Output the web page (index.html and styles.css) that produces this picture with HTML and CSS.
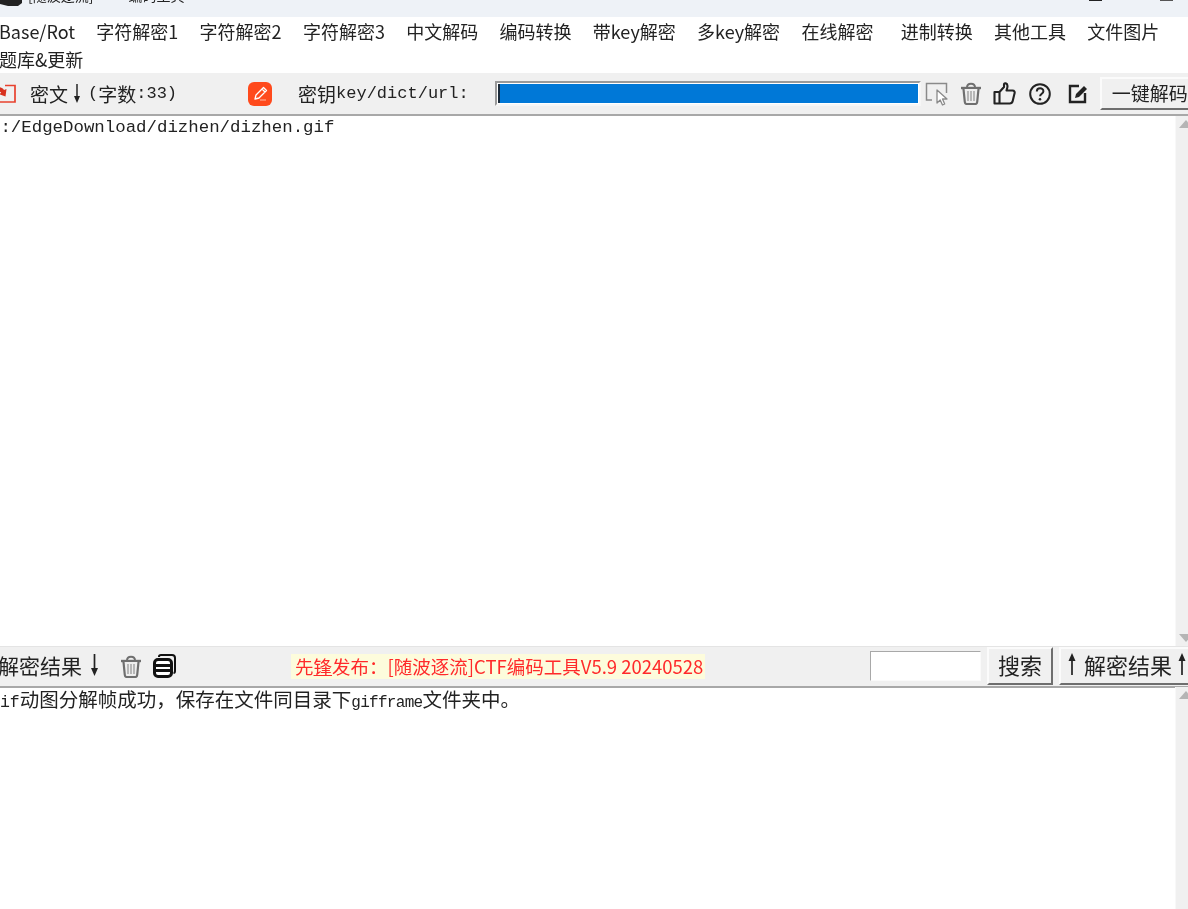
FILE: index.html
```html
<!DOCTYPE html>
<html lang="zh-CN">
<head>
<meta charset="utf-8">
<title>随波逐流 CTF编码工具</title>
<link rel="stylesheet" href="styles.css">
</head>
<body>
<div class="window">
  <header class="titlebar">
    <svg class="app-icon" width="22" height="18" viewBox="0 0 22 18"><path d="M0 0h22v3l-4 3H8L0 4z" fill="#222"/></svg>
    <span class="title-a">[随波逐流]</span>
    <span class="title-b">编码工具</span>
    <span class="win-min"></span>
    <span class="win-close"></span>
  </header>

  <nav class="menu">
    <a class="first">Base/Rot</a><a>字符解密1</a><a>字符解密2</a><a>字符解密3</a><a>中文解码</a><a>编码转换</a><a>带key解密</a><a>多key解密</a><a class="wide">在线解密</a><a>进制转换</a><a>其他工具</a><a>文件图片</a><a class="first">题库&amp;更新</a>
  </nav>

  <section class="bar top-bar">
    <svg class="ic-open" width="18" height="20" viewBox="0 0 18 20"><path d="M6 1.500h10v16.500H-1" fill="none" stroke="#e8412e" stroke-width="1.700"/><path d="M-1 3c3 0 5 1 6 3l2.500-1-1 7.500-6.500-2.500 2.200-1C2 8 1 7.500-1 7.500z" fill="#d8321f"/></svg>
    <span class="label label-cipher">密文<svg class="arr arr-s" viewBox="0 0 10 22"><use href="#arrow-down"/></svg><span class="mono">(</span>字数<span class="mono">:33)</span></span>
    <svg class="ic-pen" width="24" height="24" viewBox="0 0 24 24"><rect width="24" height="24" rx="6" fill="#ff4a1c"/><path d="M7 17l1-4 7.500-7.500 3 3L11 16z M14 7l3 3" fill="none" stroke="#fff" stroke-width="1.300" stroke-linejoin="round"/><path d="M12 18h6" stroke="#ffb9a6" stroke-width="1"/></svg>
    <span class="label label-key">密钥<span class="mono">key/dict/url:</span></span>
    <div class="key-input"><div class="key-sel"></div></div>
    <svg class="ic ic-select" width="25" height="24" viewBox="0 0 25 24"><path d="M7 18H1.500V1.500h20V11" fill="none" stroke="#8a8a8a" stroke-width="1.500"/><path d="M12 8v13l3.200-3 2.300 5 2.200-1-2.200-5H22z" fill="#fff" stroke="#8a8a8a" stroke-width="1.300" stroke-linejoin="round"/></svg>
    <svg class="ic ic-trash" width="22" height="23" viewBox="0 0 22 23"><use href="#trash"/></svg>
    <svg class="ic ic-thumb" width="23" height="23" viewBox="0 0 23 23"><path d="M6.500 10v11.500H1.500V10zM6.500 10l4.500-5V2.500c0-2 3.500-1.500 3.500 1.500 0 2-1 4-1 4.500h6c2 0 2.500 1.500 2 3l-1.800 7.500c-.4 1.600-1.400 2.500-3 2.500H6.500" fill="none" stroke="#222" stroke-width="2.100" stroke-linejoin="round"/></svg>
    <svg class="ic ic-help" width="22" height="22" viewBox="0 0 22 22"><circle cx="11" cy="11" r="9.800" fill="none" stroke="#222" stroke-width="2"/><path d="M7.800 8.500c0-4.200 6.600-4.200 6.600-.3 0 2.500-3.300 2.500-3.300 5" fill="none" stroke="#222" stroke-width="2"/><circle cx="11" cy="16.200" r="1.300" fill="#222"/></svg>
    <svg class="ic ic-edit" width="21" height="21" viewBox="0 0 21 21"><path d="M11 3H2v16h15v-9" fill="none" stroke="#222" stroke-width="2.400"/><path d="M7 15l1-4 8-8 3 3-8 8z" fill="#222"/></svg>
    <button class="btn btn-decode">一键解码</button>
  </section>

  <section class="pane pane-input">
    <div class="pane-text input-text">D:/EdgeDownload/dizhen/dizhen.gif</div>
    <div class="scroll"><span class="tri up"></span><span class="tri down"></span></div>
  </section>

  <section class="bar result-bar">
    <span class="label label-result">解密结果<svg class="arr arr-l" viewBox="0 0 10 22"><use href="#arrow-down"/></svg></span>
    <svg class="ic-rtrash" width="22" height="23" viewBox="0 0 22 23"><use href="#trash"/></svg>
    <svg class="ic-copy" width="23" height="24" viewBox="0 0 23 24"><path d="M6 3V2.500C6 1.500 7 1 8 1h11c2 0 3 1 3 3v13c0 1-.5 2-1.500 2" fill="none" stroke="#111" stroke-width="2"/><rect x="1.500" y="5.500" width="17" height="17" rx="3.500" fill="#fff" stroke="#111" stroke-width="3"/><path d="M2 11.500h15M2 16.500h15" stroke="#111" stroke-width="3"/></svg>
    <div class="notice">先<u>锋</u>发布：[随波逐流]CTF编码工具V5.9 20240528</div>
    <input class="search-input" type="text" aria-label="搜索">
    <button class="btn btn-search">搜索</button>
    <button class="btn btn-up"><svg class="arr arr-up" viewBox="0 0 10 22"><use href="#arrow-up"/></svg>解密结果<svg class="arr arr-up2" viewBox="0 0 10 22"><use href="#arrow-up"/></svg></button>
  </section>

  <section class="pane pane-output">
    <div class="pane-text output-text"><span class="mono-g">gif</span>动图分解帧成功，保存在文件同目录下<span class="mono-s">gifframe</span>文件夹中。</div>
    <div class="scroll"><span class="tri up"></span></div>
  </section>
</div>

<svg class="defs" width="0" height="0">
  <symbol id="trash" viewBox="0 0 22 23"><path d="M1 6h20" stroke="#6f6f6f" stroke-width="2.400"/><path d="M7 5.500c0-5 8-5 8 0" fill="none" stroke="#6f6f6f" stroke-width="2"/><path d="M3.500 7l1.300 13c.1 1.300 1 2 2 2h8.400c1 0 1.900-.7 2-2L18.500 7" fill="#eee" stroke="#6f6f6f" stroke-width="2.200"/><path d="M8 9v10M11 9v10M14 9v10" stroke="#9a9a9a" stroke-width="1.300"/></symbol>
  <symbol id="arrow-down" viewBox="0 0 10 22"><path d="M5 0v18" stroke="#222" stroke-width="1.700"/><path d="M1.500 14h7L5 22z" fill="#222"/></symbol>
  <symbol id="arrow-up" viewBox="0 0 10 22"><path d="M5 4v18" stroke="#222" stroke-width="1.700"/><path d="M1.500 8h7L5 0z" fill="#222"/></symbol>
</svg>
</body>
</html>
```
FILE: styles.css
```css
* { box-sizing: border-box; }
html, body { margin: 0; height: 100%; overflow: hidden; background: #fff; }
body { font-family: "Noto Sans CJK SC", "Liberation Sans", sans-serif; color: #222; }

.window { width: 1188px; height: 909px; display: flex; flex-direction: column; overflow: hidden; filter: blur(.35px); }

.titlebar { flex: 0 0 18px; background: #eef2f7; border-bottom: 1px solid #d2d5d9; display: flex; align-items: flex-start; overflow: hidden; font-size: 14px; line-height: 16px; color: #222; }
.app-icon { flex: none; }
.title-a { margin: -13px 0 0 6px; }
.title-b { margin: -13px 0 0 35px; }
.win-min { margin-left: auto; width: 13px; height: 1px; background: #222; }
.win-close { margin: 0 15px 0 58px; width: 13px; height: 1px; background: #555; }

.menu { flex: 0 0 56px; background: #fff; display: flex; flex-wrap: wrap; align-content: flex-start; column-gap: 21.3px; font-size: 18px; line-height: 28px; margin-top: -1px; }
.menu a { color: #222; }
.menu .first { margin-left: -1px; }
.menu .wide { margin-right: 6px; }

.bar { background: #f0f0f0; display: flex; align-items: center; }
.top-bar { flex: 0 0 43px; border-bottom: 2px solid #a8a8a8; }
.result-bar { flex: 0 0 42px; border-top: 1px solid #e4e4e4; border-bottom: 2px solid #a8a8a8; padding-bottom: 1px; }

.label { color: #222; white-space: nowrap; line-height: 24px; }
.mono { font-family: "Liberation Mono", monospace; font-size: 17px; }
.arr { flex: none; display: block; }
.arr-s { width: 10px; height: 19px; margin: 0 6px 0 4px; }
.arr-l { width: 11px; height: 22px; margin-left: 7px; }
.arr-up { width: 10px; height: 22px; margin-right: 7px; }
.arr-up2 { width: 10px; height: 22px; margin-left: 5px; }

.ic-open { flex: none; margin-left: -1px; }
.label-cipher { margin-left: 13px; font-size: 19px; display: flex; align-items: center; }
.ic-pen { flex: none; margin-left: 71px; }
.label-key { margin-left: 26px; font-size: 19px; display: flex; align-items: center; }
.key-input { flex: none; margin-left: 26px; width: 426px; height: 25px; background: #fff; border: 2px solid; border-color: #9a9a9a #f6f6f6 #f6f6f6 #9a9a9a; padding: 1px; }
.key-sel { height: 100%; background: #0078d7; border-left: 2px solid #1a2a3a; }
.ic { flex: none; }
.ic-select { margin-left: 4px; }
.ic-trash { margin-left: 10px; }
.ic-thumb { margin-left: 11px; }
.ic-help { margin-left: 13px; }
.ic-edit { margin-left: 17px; }

.btn { font-family: inherit; color: #222; background: #f0f0f0; border: 2px solid; border-color: #fbfbfb #6e6e6e #6e6e6e #fbfbfb; padding: 0 0 5px; line-height: 1; white-space: nowrap; display: flex; align-items: center; justify-content: center; flex: none; }
.btn-decode { margin-left: 11px; width: 100px; height: 33px; font-size: 19px; justify-content: flex-start; padding-left: 10px; padding-bottom: 3px; }

.pane { display: flex; min-height: 0; background: #fff; }
.pane-input { flex: 0 0 530px; }
.pane-output { flex: 1 1 auto; }
.pane-text { flex: 1; min-width: 0; overflow: hidden; white-space: nowrap; color: #222; }
.input-text { font-family: "Liberation Mono", monospace; font-size: 17.4px; line-height: 24px; margin-left: -10px; }
.output-text { font-size: 19.5px; line-height: 20px; margin-top: 1px; margin-left: -10px; }
.mono-g { font-family: "Liberation Mono", monospace; font-size: 16.5px; }
.mono-s { font-family: "Liberation Mono", monospace; font-size: 16px; letter-spacing: -.7px; }

.scroll { flex: 0 0 13px; background: #f0f0f0; border-left: 1px solid #f8f8f8; display: flex; flex-direction: column; justify-content: space-between; align-items: flex-end; overflow: hidden; padding: 4px 0; }
.pane-output .scroll { margin-top: -1px; }
.tri { width: 0; height: 0; border-left: 7px solid transparent; border-right: 7px solid transparent; margin-right: -5px; }
.tri.up { border-bottom: 8px solid #b5b5b5; }
.tri.down { border-top: 8px solid #b5b5b5; }

.label-result { margin-left: -2px; margin-bottom: 3px; font-size: 21px; display: flex; align-items: center; }
.ic-rtrash { flex: none; margin-left: 20px; }
.ic-copy { flex: none; margin-left: 11px; }
.notice { flex: none; margin-left: 115px; width: 414px; height: 25px; background: #fdfcdc; color: #ff2a2a; font-size: 18.5px; line-height: 24px; padding-left: 4px; white-space: nowrap; overflow: hidden; }
.search-input { flex: none; margin-left: 165px; width: 111px; height: 30px; background: #fff; border: 1px solid; border-color: #a8a8a8 #fafafa #fafafa #a8a8a8; padding: 0; }
.btn-search { margin-left: 6px; width: 66px; height: 38px; font-size: 22px; }
.btn-up { margin-left: 6px; width: 150px; height: 38px; font-size: 22px; justify-content: flex-start; padding-left: 6px; }

.defs { position: absolute; }
```
